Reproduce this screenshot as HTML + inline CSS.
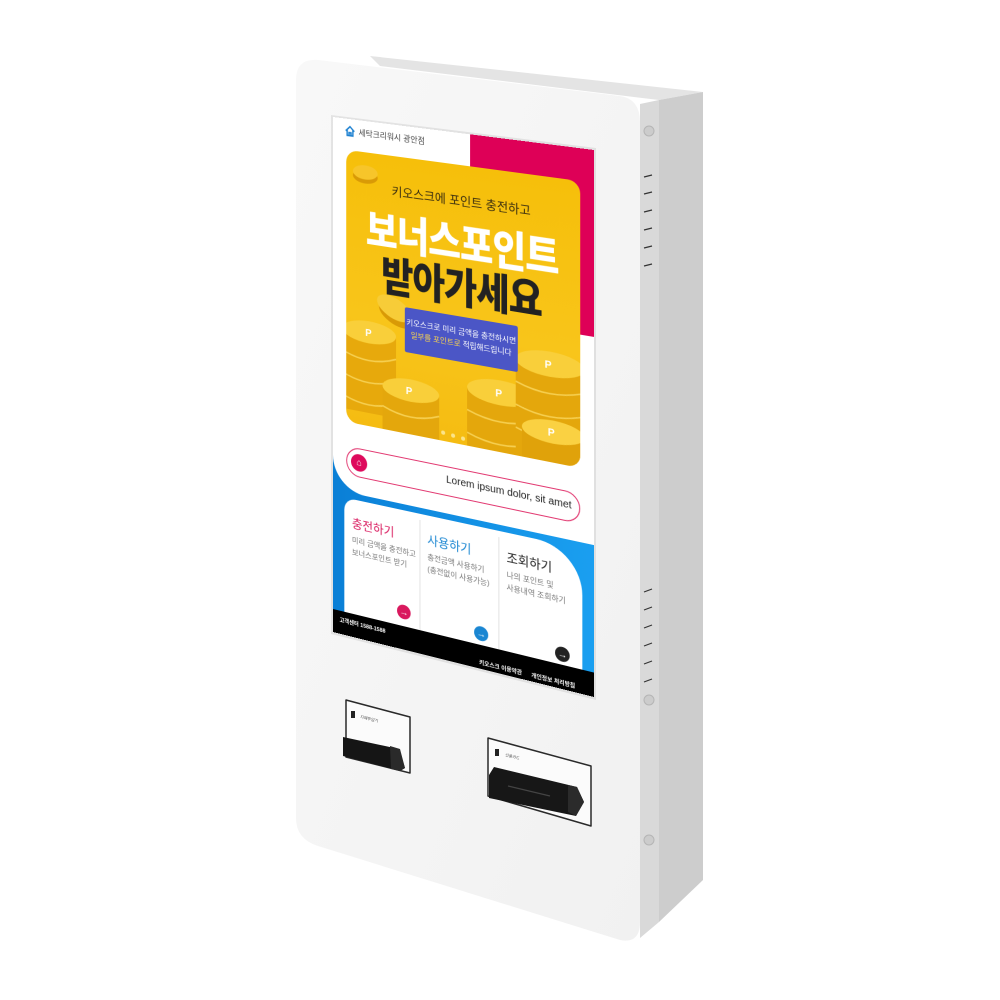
<!DOCTYPE html>
<html><head><meta charset="utf-8"><style>
*{margin:0;padding:0;box-sizing:border-box}
body{width:1000px;height:1000px;background:#fff;position:relative;overflow:hidden;font-family:"Liberation Sans","Noto Sans CJK KR",sans-serif}
svg.abs{position:absolute;left:0;top:0}
#scr{position:absolute;left:0;top:0;width:261px;height:515px;transform-origin:0 0;transform:matrix3d(0.8669,0.09282,0,-0.0002241,0,1,0,0,0,0,1,0,333,117,0,1);overflow:hidden;background:linear-gradient(90deg,#0a7fd6,#1a9ff0)}
.a{position:absolute}
.kr{font-family:"Liberation Sans","Noto Sans CJK KR",sans-serif}
</style></head><body>
<svg class="abs" width="1000" height="1000">
<defs>
<linearGradient id="pg" x1="0" y1="0" x2="1" y2="1"><stop offset="0" stop-color="#f8f8f8"/><stop offset="1" stop-color="#f1f1f1"/></linearGradient>
</defs>
<polygon points="370,56 703,92 659,100 380,66" fill="#e4e4e4"/>
<polygon points="659,100 703,92 703,880 659,922" fill="#cdcdcd"/>
<polygon points="640,104 659,100 659,922 640,938" fill="#d9d9d9"/>
<path d="M296,80 Q296,58 318,60 L620,96 Q640,99 640,122 L640,922 Q640,944 620,940 L318,846 Q296,839 296,818 Z" fill="url(#pg)"/>
<g fill="#ccc" stroke="#b5b5b5" stroke-width="1"><circle cx="649" cy="131" r="5"/><circle cx="649" cy="700" r="5"/><circle cx="649" cy="840" r="5"/></g>
<g stroke="#333" stroke-width="1.2">
<line x1="644" y1="177" x2="652" y2="175"/><line x1="644" y1="194" x2="652" y2="192"/><line x1="644" y1="212" x2="652" y2="210"/><line x1="644" y1="230" x2="652" y2="228"/><line x1="644" y1="248" x2="652" y2="246"/><line x1="644" y1="266" x2="652" y2="264"/>
<line x1="644" y1="592" x2="652" y2="589"/><line x1="644" y1="610" x2="652" y2="607"/><line x1="644" y1="628" x2="652" y2="625"/><line x1="644" y1="646" x2="652" y2="643"/><line x1="644" y1="664" x2="652" y2="661"/><line x1="644" y1="682" x2="652" y2="679"/>
</g>
<polygon points="331,115 596,148 596,700 331,634" fill="#000" opacity="0.08"/>
</svg>

<div id="scr">
 <div class="a" style="left:0;top:0;width:261px;height:372px;background:#fff;border-bottom-left-radius:34px"></div>
 <div class="a" style="left:141px;top:0;width:120px;height:176px;background:#de0057"></div>
 <svg class="a" style="left:12px;top:6px" width="12" height="12" viewBox="0 0 12 12"><path d="M1.5,6 L6,1.5 L10.5,6 M3,5 V10.5 H9 V5 M5,10.5 V7.5 H7 V10.5" fill="none" stroke="#1a7fd0" stroke-width="1.5"/></svg>
 <div class="a kr" style="left:27px;top:7px;font-size:8px;color:#444">세탁크리워시 광안점</div>
 <div class="a" style="left:14px;top:31px;width:234px;height:271px;border-radius:12px;background:linear-gradient(180deg,#f6bf0a,#f8c51a 60%,#f5bc12);overflow:hidden">
  <svg class="a" style="left:0;top:0" width="234" height="271">
   <g>
    <ellipse cx="20" cy="24" rx="13" ry="7" fill="#d99a06"/><ellipse cx="20" cy="20" rx="13" ry="7" fill="#f7c52a"/>
    <ellipse cx="52" cy="156" rx="19" ry="10" fill="#d99a06" transform="rotate(25 52 156)"/><ellipse cx="50" cy="150" rx="19" ry="10" fill="#f7cc38" transform="rotate(25 50 150)"/>
   </g>
   <g>
    <rect x="-4" y="178" width="56" height="80" fill="#e7a90c"/>
    <path d="M-4,200 Q24,212 52,200 M-4,222 Q24,234 52,222 M-4,244 Q24,256 52,244" stroke="#f6cf50" stroke-width="1.5" fill="none"/>
    <ellipse cx="24" cy="178" rx="28" ry="11" fill="#f9cf3a"/>
    <text x="20" y="182" font-size="10" font-weight="bold" fill="#fff" font-family="Liberation Sans">P</text>
   </g>
   <g>
    <rect x="38" y="228" width="58" height="50" fill="#e4a70c"/>
    <path d="M38,248 Q67,260 96,248" stroke="#f6cf50" stroke-width="1.5" fill="none"/>
    <ellipse cx="67" cy="228" rx="29" ry="11" fill="#f9cf3a"/>
    <text x="62" y="232" font-size="10" font-weight="bold" fill="#fff" font-family="Liberation Sans">P</text>
   </g>
   <g>
    <rect x="124" y="214" width="66" height="70" fill="#e4a70c"/>
    <path d="M124,236 Q157,248 190,236 M124,258 Q157,270 190,258" stroke="#f6cf50" stroke-width="1.5" fill="none"/>
    <ellipse cx="157" cy="214" rx="33" ry="12" fill="#f9cf3a"/>
    <text x="152" y="218" font-size="10" font-weight="bold" fill="#fff" font-family="Liberation Sans">P</text>
   </g>
   <g>
    <rect x="172" y="178" width="66" height="90" fill="#e4a70c"/>
    <path d="M172,200 Q205,212 238,200 M172,222 Q205,234 238,222 M172,244 Q205,256 238,244" stroke="#f6cf50" stroke-width="1.5" fill="none"/>
    <ellipse cx="205" cy="178" rx="33" ry="12" fill="#f9cf3a"/>
    <text x="200" y="182" font-size="10" font-weight="bold" fill="#fff" font-family="Liberation Sans">P</text>
   </g>
   <g>
    <rect x="178" y="242" width="60" height="30" fill="#e0a20a"/>
    <ellipse cx="208" cy="242" rx="30" ry="11" fill="#fad142"/>
    <text x="203" y="246" font-size="10" font-weight="bold" fill="#fff" font-family="Liberation Sans">P</text>
   </g>
   <circle cx="100" cy="263" r="2" fill="#fbe48a"/><circle cx="110" cy="264" r="2" fill="#fbe48a"/><circle cx="120" cy="265" r="2" fill="#fbe48a"/>
  </svg>
  <div class="a kr" style="left:0;width:234px;top:26px;text-align:center;font-size:12px;color:#3a2e10">키오스크에 포인트 충전하고</div>
  <div class="a kr" style="left:0;width:234px;top:56px;text-align:center;font-size:36px;font-weight:900;color:#fff;letter-spacing:-1px;line-height:42px;transform:scaleY(1.15)">보너스포인트</div>
  <div class="a kr" style="left:0;width:234px;top:99px;text-align:center;font-size:36px;font-weight:900;color:#222;letter-spacing:-1px;line-height:42px;transform:scaleY(1.15)">받아가세요</div>
  <div class="a kr" style="left:61px;top:147px;width:113px;height:44px;background:#4b56c6;color:#fff;font-size:7.5px;text-align:center;line-height:12px;padding-top:9px;border-radius:2px">키오스크로 미리 금액을 충전하시면<br><span style="color:#ffd84a">일부를 포인트로</span> 적립해드립니다</div>
 </div>
 <div class="a" style="left:14px;top:326px;width:234px;height:29px;border:1.5px solid #e23a72;border-radius:15px;background:#fff"></div>
 <div class="a" style="left:19px;top:332px;width:17px;height:17px;border-radius:50%;background:#de0a5c;color:#fff;font-size:9px;text-align:center;line-height:17px">⌂</div>
 <div class="a" style="left:117px;top:334px;width:126px;height:16px;overflow:hidden;white-space:nowrap;font-size:10px;color:#222">Lorem ipsum dolor, sit amet c</div>
 <div class="a" style="left:12px;top:378px;width:238px;height:120px;background:#fff;border-top-left-radius:12px;border-top-right-radius:44px"></div>
 <div class="a" style="left:90px;top:384px;width:1px;height:110px;background:#e2e2e2"></div>
 <div class="a" style="left:169px;top:384px;width:1px;height:110px;background:#e2e2e2"></div>
 <div class="a kr" style="left:20px;top:393px;font-size:12px;color:#d9195e">충전하기</div>
 <div class="a kr" style="left:20px;top:413px;font-size:7.5px;line-height:12px;color:#777">미리 금액을 충전하고<br>보너스포인트 받기</div>
 <div class="a kr" style="left:98px;top:393px;font-size:12px;color:#1a86d2">사용하기</div>
 <div class="a kr" style="left:98px;top:413px;font-size:7.5px;line-height:12px;color:#777">충전금액 사용하기<br>(충전없이 사용가능)</div>
 <div class="a kr" style="left:177px;top:393px;font-size:12px;color:#222">조회하기</div>
 <div class="a kr" style="left:177px;top:413px;font-size:7.5px;line-height:12px;color:#777">나의 포인트 및<br>사용내역 조회하기</div>
 <div class="a" style="left:67px;top:471px;width:14px;height:14px;border-radius:50%;background:#d9195e;color:#fff;font-size:9px;text-align:center;line-height:14px;font-weight:bold">→</div>
 <div class="a" style="left:145px;top:474px;width:14px;height:14px;border-radius:50%;background:#1a86d2;color:#fff;font-size:9px;text-align:center;line-height:14px;font-weight:bold">→</div>
 <div class="a" style="left:224px;top:475px;width:14px;height:14px;border-radius:50%;background:#222;color:#fff;font-size:9px;text-align:center;line-height:14px;font-weight:bold">→</div>
 <div class="a" style="left:0;top:492px;width:261px;height:23px;background:#000"></div>
 <div class="a kr" style="left:7px;top:497px;font-size:5.5px;color:#fff;font-weight:bold">고객센터 1588-1588</div>
 <div class="a kr" style="left:150px;top:505px;font-size:5.5px;color:#fff;font-weight:bold">키오스크 이용약관 &nbsp;&nbsp;&nbsp;&nbsp; 개인정보 처리방침</div>
</div>

<svg class="abs" width="1000" height="1000">
 <polygon points="346,700 410,717 410,773 346,757" fill="#fbfbfb" stroke="#2a2a2a" stroke-width="1.5" stroke-linejoin="round"/>
 <rect x="351" y="711" width="4" height="7" fill="#222"/>
 <text x="360" y="718" font-size="4" fill="#555" transform="rotate(14 360 718)">지폐투입기</text>
 <polygon points="343,737 399,749 405,768 400,771 343,756" fill="#151515"/>
 <polygon points="390,746 400,749 405,768 400,771 391,769" fill="#2a2a2a"/>
 <polygon points="488,738 591,766 591,826 488,796" fill="#fbfbfb" stroke="#2a2a2a" stroke-width="1.5" stroke-linejoin="round"/>
 <rect x="495" y="749" width="4" height="7" fill="#222"/>
 <text x="505" y="756" font-size="4" fill="#555" transform="rotate(15 505 756)">신용카드</text>
 <polygon points="494,767 577,787 584,802 576,816 489,798 489,775" fill="#171717"/>
 <line x1="508" y1="786" x2="550" y2="796" stroke="#444" stroke-width="1.2"/>
 <polygon points="568,785 577,787 584,802 576,816 568,812" fill="#2b2b2b"/>
</svg>
</body></html>
